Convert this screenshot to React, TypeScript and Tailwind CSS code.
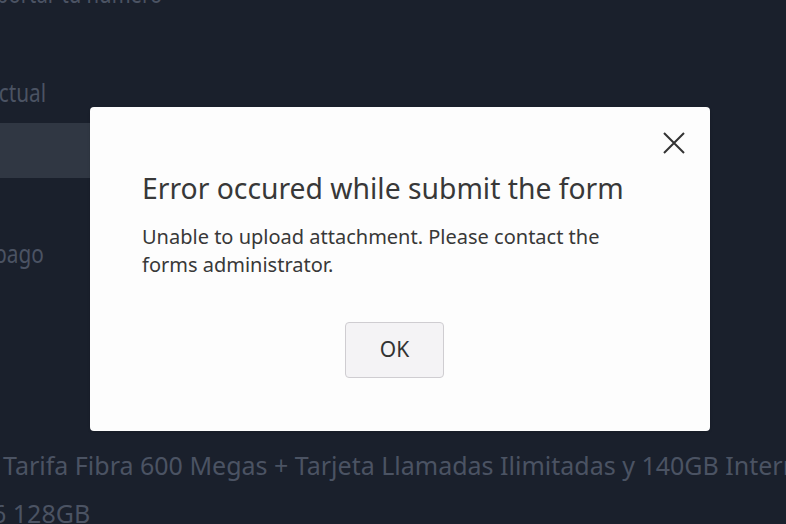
import React from "react";

export default function App() {
  const font = { fontFamily: '"Noto Sans", "Open Sans", sans-serif' };
  return (
    <div
      className="relative w-[786px] h-[524px] overflow-hidden bg-[#1a202c]"
      style={font}
    >
      <div className="flex flex-col items-start text-[#4b5363] whitespace-nowrap">
        <div className="mt-[-23px] ml-[-4px] text-[26px] leading-[32px] origin-left scale-x-[0.78]">portar tu número</div>
        <div className="mt-[67px] ml-[-13px] text-[26px] leading-[32px] origin-left scale-x-[0.8]">actual</div>
        <div className="mt-[15px] h-[55px] w-[120px] bg-[#303743]" />
        <div className="mt-[59px] ml-[-6px] text-[26px] leading-[32px] origin-left scale-x-[0.8]">pago</div>
        <div className="mt-[180px] ml-[3px] text-[25px] leading-[32px]">
          Tarifa Fibra 600 Megas + Tarjeta Llamadas Ilimitadas y 140GB Internet
        </div>
        <div className="mt-[16px] ml-[-8px] text-[25px] leading-[32px]">6 128GB</div>
      </div>

      <div className="absolute left-[90px] top-[107px] w-[620px] h-[324px] rounded-[4px] bg-[#fdfdfd] shadow-sm">
        <button className="absolute right-[24px] top-[24px] w-[24px] h-[24px] flex items-center justify-center">
          <svg width="22" height="22" viewBox="0 0 22 22" fill="none" stroke="#333" strokeWidth="2">
            <path d="M1 1 L21 21 M21 1 L1 21" />
          </svg>
        </button>
        <div className="flex flex-col pl-[52px] pr-[40px] pt-[63px]">
          <h2 className="text-[28.3px] leading-[36px] text-[#383838]">Error occured while submit the form</h2>
          <p className="mt-[17px] text-[20px] leading-[28px] text-[#383838] w-[470px]">
            Unable to upload attachment. Please contact the forms administrator.
          </p>
          <div className="flex justify-start mt-[43px] pl-[203px]">
            <button className="w-[99px] h-[56px] rounded-[4px] border border-[#cfcdd1] bg-[#f4f3f5] text-[21px] text-[#333]">
              OK
            </button>
          </div>
        </div>
      </div>
    </div>
  );
}
